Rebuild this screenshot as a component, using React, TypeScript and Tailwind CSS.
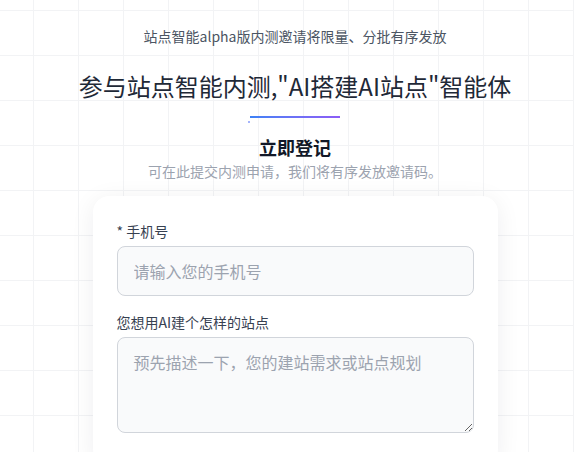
import React from "react";

export default function App() {
  return (
    <div
      lang="zh-CN"
      className="min-h-[452px] w-full bg-white bg-[linear-gradient(to_right,#f2f3f5_1px,transparent_1px),linear-gradient(to_bottom,#f2f3f5_1px,transparent_1px)] bg-[size:45px_45px] bg-[position:33px_10px] pl-4 overflow-hidden"
      style={{ fontFamily: '"Noto Sans CJK SC", "Noto Sans", sans-serif' }}
    >
      <div className="flex flex-col items-center pt-[26px]">
        <p className="text-[14px] leading-5 text-[#4b5563]">站点智能alpha版内测邀请将限量、分批有序发放</p>
        <h1 className="mt-6 text-[24px] leading-8 text-[#1f2937]">参与站点智能内测,"AI搭建AI站点"智能体</h1>
        <div className="relative mt-[14px] h-[2px] w-[90px] bg-gradient-to-r from-[#3b82f6] to-[#8b5cf6]">
          <span className="absolute left-[-2px] top-[5px] h-[2px] w-[2px] bg-[#a5b4fc]" />
        </div>
        <h2 className="mt-[15px] text-[18px] leading-7 font-bold text-[#111827]">立即登记</h2>
        <p className="text-[14px] leading-5 text-[#9ca3af]">可在此提交内测申请，我们将有序发放邀请码。</p>
        <div className="mt-[15px] w-[405px] rounded-2xl bg-white px-6 pt-[25px] pb-8 shadow-[0_4px_24px_rgba(15,23,42,0.07)]">
          <label className="mb-[5px] block text-[14px] leading-5 text-[#374151]">* 手机号</label>
          <input
            className="block h-[50px] w-full rounded-lg border border-[#d1d5db] bg-[#f9fafb] px-4 text-[16px] leading-6 text-[#111827] placeholder:text-[#9ca3af] outline-none"
            placeholder="请输入您的手机号"
          />
          <label className="mt-4 mb-[5px] block text-[14px] leading-5 text-[#374151]">您想用AI建个怎样的站点</label>
          <textarea
            className="block h-[96px] w-full rounded-lg border border-[#d1d5db] bg-[#f9fafb] px-4 py-3 text-[16px] leading-6 text-[#111827] placeholder:text-[#9ca3af] outline-none"
            placeholder="预先描述一下，您的建站需求或站点规划"
          />
        </div>
      </div>
    </div>
  );
}
